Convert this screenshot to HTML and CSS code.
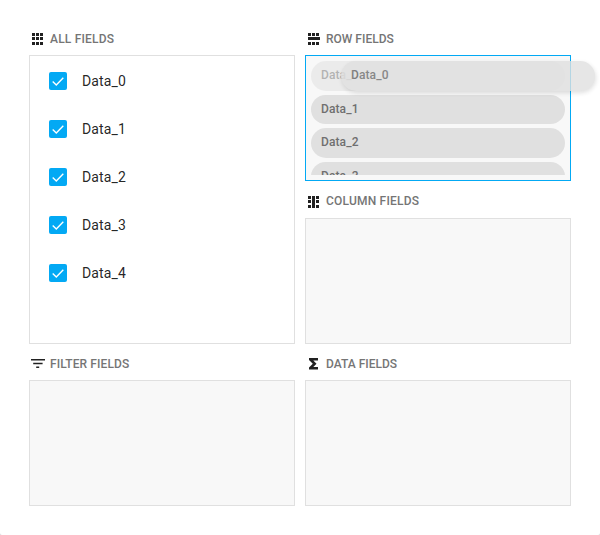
FILE: index.html
```
<!DOCTYPE html>
<html lang="en">
<head>
<meta charset="utf-8">
<title>Field chooser</title>
<link rel="stylesheet" href="styles.css">
</head>
<body>
<main class="chooser">
  <div class="column">
    <section class="area area-all">
      <h2 class="title title-wide"><svg class="icon" viewBox="0 0 18 18"><path d="M3 3h3v3H3zM7 3h3v3H7zM11 3h3v3h-3zM3 7h3v3H3zM7 7h3v3H7zM11 7h3v3h-3zM3 12h3v3H3zM7 12h3v3H7zM11 12h3v3h-3z"/></svg>ALL FIELDS</h2>
      <ul class="box box-all">
        <li class="item"><span class="check"><svg viewBox="0 0 18 18"><path d="M3.700 9.500l3.600 3.500 7-7.200"/></svg></span>Data_0</li>
        <li class="item"><span class="check"><svg viewBox="0 0 18 18"><path d="M3.700 9.500l3.600 3.500 7-7.200"/></svg></span>Data_1</li>
        <li class="item"><span class="check"><svg viewBox="0 0 18 18"><path d="M3.700 9.500l3.600 3.500 7-7.200"/></svg></span>Data_2</li>
        <li class="item"><span class="check"><svg viewBox="0 0 18 18"><path d="M3.700 9.500l3.600 3.500 7-7.200"/></svg></span>Data_3</li>
        <li class="item"><span class="check"><svg viewBox="0 0 18 18"><path d="M3.700 9.500l3.600 3.500 7-7.200"/></svg></span>Data_4</li>
      </ul>
    </section>
    <section class="area">
      <h2 class="title title-filter"><svg class="icon" viewBox="0 0 18 18"><path d="M2 4h14v1.600H2zM4.200 7.700h9.400v1.500H4.200zM7.200 11.400h3V13h-3z"/></svg>FILTER FIELDS</h2>
      <div class="box"></div>
    </section>
  </div>
  <div class="column">
    <section class="area area-row">
      <h2 class="title"><svg class="icon" viewBox="0 0 18 18"><path d="M3 3h3v3H3zM7 3h3v3H7zM11 3h3v3h-3zM3 7h12v3H3zM3 12h3v3H3zM7 12h3v3H7zM11 12h3v3h-3z"/></svg>ROW FIELDS</h2>
      <div class="box box-active">
        <ul class="chips">
          <li class="chip chip-source">Data_0</li>
          <li class="chip">Data_1</li>
          <li class="chip">Data_2</li>
          <li class="chip">Data_3</li>
        </ul>
        <div class="chip chip-drag">Data_0</div>
      </div>
    </section>
    <section class="area area-column">
      <h2 class="title title-wide title-column"><svg class="icon" viewBox="0 0 18 18"><path d="M3 3h3v3H3zM11 3h3v3h-3zM3 7h3v3H3zM11 7h3v3h-3zM3 12h3v3H3zM11 12h3v3h-3zM7 3h3v12H7z"/></svg>COLUMN FIELDS</h2>
      <div class="box"></div>
    </section>
    <section class="area">
      <h2 class="title"><svg class="icon" viewBox="0 0 18 18"><path d="M4 3h9v2.500H8.300l3.200 3.300-3.200 3.200H13v2.500H4v-2l3.800-3.700L4 5z"/></svg>DATA FIELDS</h2>
      <div class="box"></div>
    </section>
  </div>
</main>
</body>
</html>
```
FILE: styles.css
```
* { box-sizing: border-box; }

html { background: #d5d5d5; }

body {
  margin: 0;
  height: 535px;
  overflow: hidden;
  background: #fff;
  border-radius: 0 0 2px 2px;
  font-family: Roboto, sans-serif;
  color: rgba(0, 0, 0, .87);
}

.chooser {
  display: grid;
  grid-template-columns: 266px 266px;
  column-gap: 10px;
  padding: 18px 29px 0;
}

ul { list-style: none; margin: 0; padding: 0; }

.area-all { height: 325px; }
.area-row { height: 163px; }
.area-column { height: 162px; }

.title {
  display: flex;
  align-items: center;
  height: 37px;
  margin: 0;
  padding: 5px 0 0;
  font-size: 12px;
  font-weight: 500;
  line-height: 18px;
  color: #757575;
}

.title-wide { letter-spacing: .2px; }
.title-filter { letter-spacing: .1px; }
.title-column { padding-top: 3px; }
.title-column .icon { margin-top: 2px; }

.icon {
  width: 18px;
  height: 18px;
  margin-right: 3px;
  fill: #212121;
}

.box {
  height: 126px;
  border: 1px solid #e0e0e0;
  background: #f8f8f8;
}

.box-all {
  height: 289px;
  padding: 1px 0 0 19px;
  background: #fff;
}

.item {
  display: flex;
  align-items: center;
  height: 48px;
  font-size: 14px;
  letter-spacing: .15px;
}

.check {
  width: 18px;
  height: 18px;
  margin-right: 15px;
  border-radius: 2px;
  background: #03a9f4;
}

.check svg {
  display: block;
  fill: none;
  stroke: #fff;
  stroke-width: 1.4;
}

.box-active {
  position: relative;
  padding: 5px;
  border-color: #03a9f4;
}

.chips {
  display: flex;
  flex-direction: column;
  gap: 4px;
  height: 114px;
  overflow: hidden;
}

.chip {
  flex: none;
  height: 29.5px;
  padding: 0 10px;
  border-radius: 15px;
  background: #e0e0e0;
  font-size: 12px;
  font-weight: 500;
  letter-spacing: .1px;
  line-height: 28px;
  color: #6f6f6f;
}

.chip-source { opacity: .5; }

/* Chip held by the pointer, floating over the list */
.chip-drag {
  position: absolute;
  left: 35px;
  top: 5px;
  width: 254px;
  opacity: .8;
  box-shadow: 1px 2px 4px rgba(0, 0, 0, .15);
}
```
